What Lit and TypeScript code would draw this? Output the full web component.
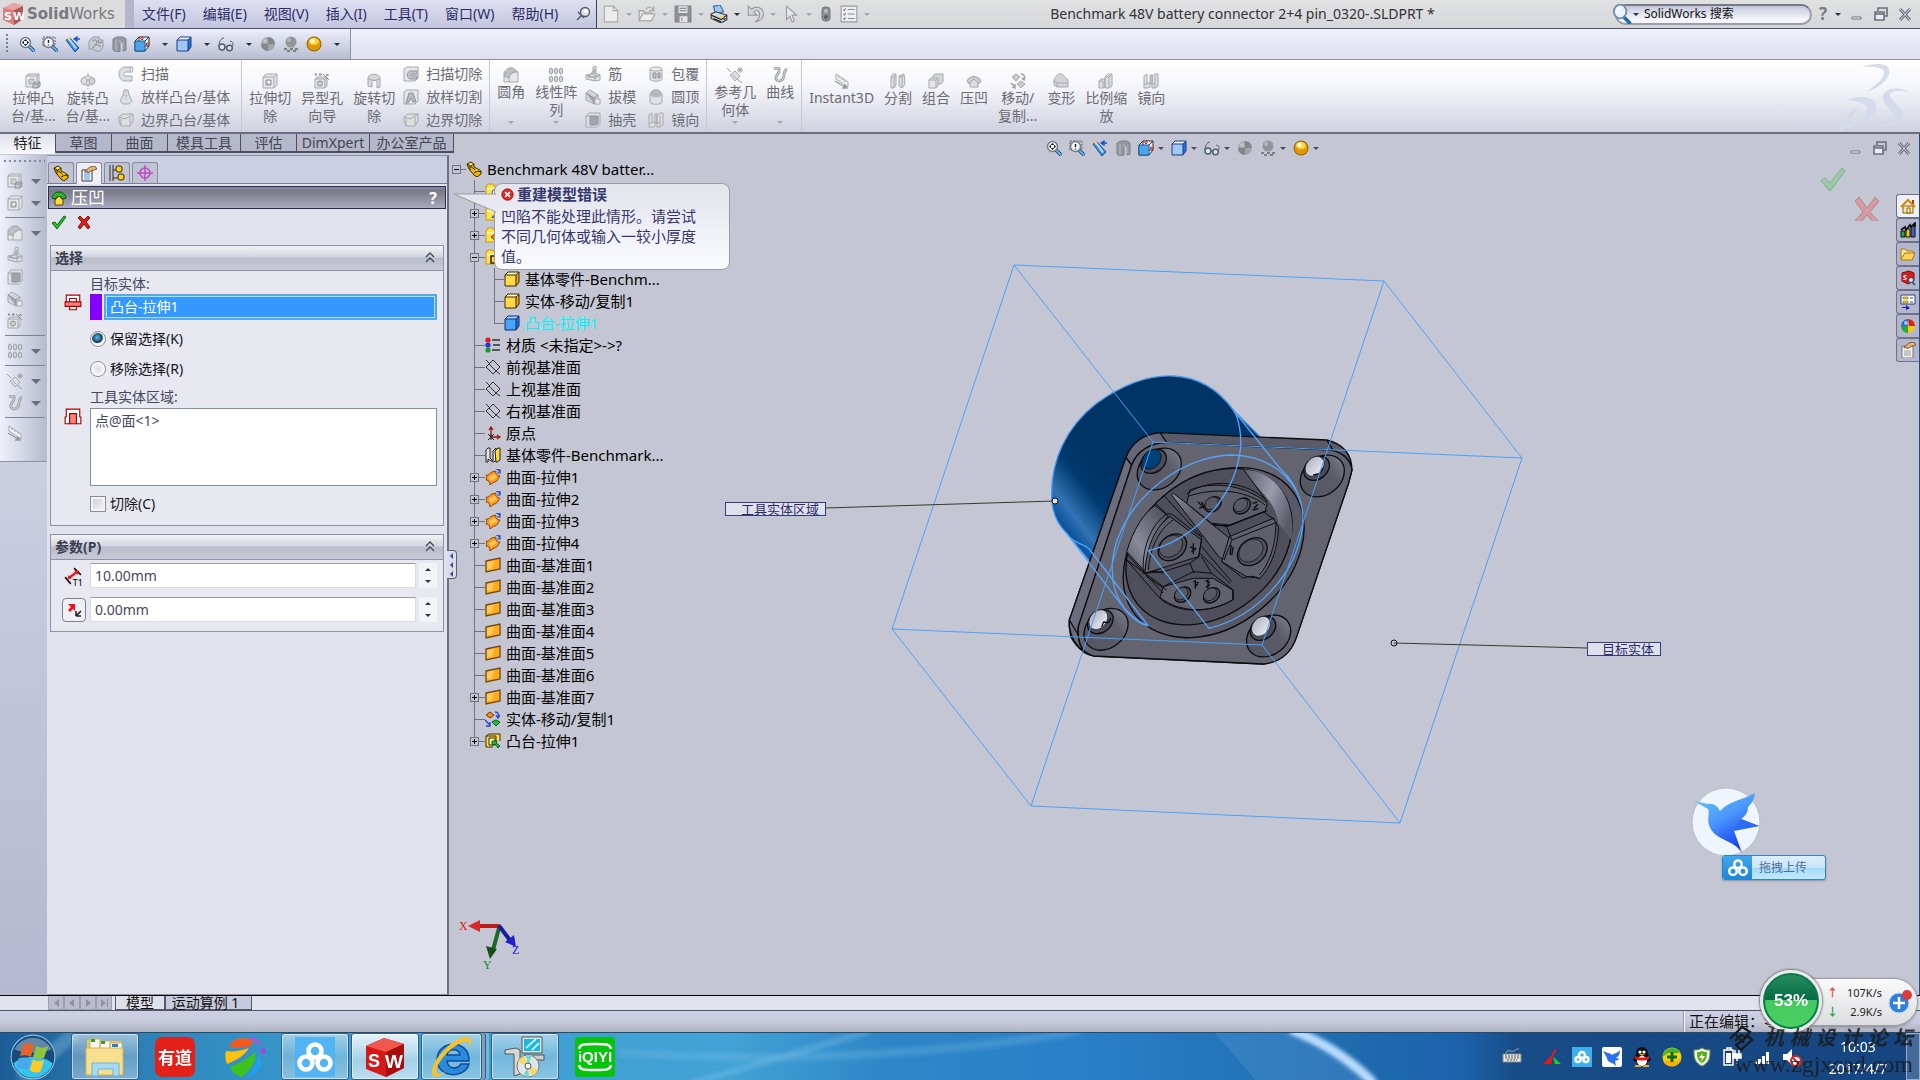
import { LitElement, html, css, svg, nothing } from "lit";
import { customElement } from "lit/decorators.js";
import { classMap } from "lit/directives/class-map.js";

/* ---------- icon artwork, each on a 16 x 16 grid ---------- */

const G = "#a6a8b0";
const cube = (face: string, top: string, side: string, line: string) => svg`
  <path d="M1 4l3-3h11l-3 3z" fill=${top}/><path d="M12 4l3-3v10l-3 4z" fill=${side}/>
  <path d="M1 4h11v11H1z" fill=${face}/>
  <path d="M1 4l3-3h11v10l-3 4H1zM1 4h11v11M12 4l3-3" fill="none" stroke=${line} stroke-linejoin="round"/>`;

const lens = (inner: unknown, dash = false) => svg`
  <path d="M10 10l5 5" stroke="#16406e" stroke-width="3.4" stroke-linecap="round"/>
  <path d="M10 10l5 5" stroke="#6db4ee" stroke-width="1.8" stroke-linecap="round"/>
  ${dash ? svg`<rect x="1" y="1" width="12" height="9" fill="none" stroke="#666" stroke-dasharray="2 1"/>` : nothing}
  <circle cx="6.500" cy="6.500" r="5" fill="#f2f6fb" stroke="#777b86" stroke-width="1.500"/>${inner}`;

const plane = svg`<path d="M1 8L8 1l7 7-7 7zM4 5l7 7M1 1l4 4M11 12l4 3" fill="none" stroke="#222" stroke-width="0.900"/>`;
const folder = (mark: unknown) => svg`
  <path d="M1 3h1l1-2h5l1 2h6v12H1z" fill="#ffe34d" stroke="#c79a1c"/><path d="M2 5h12v2H2z" fill="#fff7a0"/>${mark}`;

const icons: Record<string, unknown> = {
  fit: lens(svg`<path d="M6.500 3l2 2h-4zM6.500 10l2-2h-4zM3 6.500l2-2v4zM10 6.500l-2-2v4z" fill="#222"/>`),
  area: lens(svg`<path d="M6.500 4v3M6.500 8.500v1" stroke="#222" stroke-width="1.400"/>`, true),
  prev: svg`<path d="M1 4l4-2 9 10-4 4z" fill="#3b8ee0" stroke="#1c4e8c"/><path d="M3 3l3 1 6 8-2 1z" fill="#b5dcfb"/>
    <circle cx="4" cy="3" r="1.600" fill="#efd27a"/><path d="M9 3h6M9 3l3-2v4z" stroke="#2454c6" fill="#2454c6" stroke-width="1.300"/>`,
  sect: svg`<path d="M1 5l4-4h6l1 3h3v8l-3 3H8l-3-2H1z" fill="#c9cbd2" stroke="#9a9ca6"/><path d="M4 5c4-3 7 1 3 4M5 12c0-4 6-4 8-1M10 4l1 3 3-1" fill="none" stroke="#83858f"/>`,
  column: svg`<path d="M2 3l4-2h6l3 2v11l-3 1V6H9v9l-4 1-3-2z" fill="#96989f" stroke="#7c7e86"/><path d="M5 4v11M9 4v3M12 5v9" stroke="#b9bbc1"/>`,
  orient: svg`<path d="M1 5l4-4h10v9l-4 5H1z" fill="#e9edf5" stroke="#333"/><path d="M1 5h10v10H1z" fill="#4da6ea" stroke="#1d5c9c"/>
    <path d="M11 5l4-4M5 1v4M15 10h-4" stroke="#333" fill="none"/><path d="M8 0v4M6.500 2.500L8 4l1.500-1.500M16 8h-4M13.500 6.500L12 8l1.500 1.500" stroke="#d3181c" fill="none"/>`,
  style: cube("#9fc8f5", "#e6f1fd", "#2e6fd8", "#1d3f86"),
  glasses: svg`<circle cx="4" cy="11" r="3" fill="#d4e9f8" stroke="#555a66" stroke-width="1.400"/><circle cx="11.500" cy="12" r="2.800" fill="#d4e9f8" stroke="#555a66" stroke-width="1.400"/>
    <path d="M1 10c0-4 2-8 5-8M7 11h2M14 11c2-4 1-5-2-6" fill="none" stroke="#555a66"/>`,
  grayball: svg`<circle cx="8" cy="8" r="7" fill="#a3a5ac"/><path d="M8 1a7 7 0 0 1 7 7H8zM1 8h7v7a7 7 0 0 1-7-7z" fill="#84868d"/><circle cx="5" cy="5" r="2" fill="#c4c6cb"/>`,
  scene: svg`<path d="M1 11h14l1 5H0z" fill="#c4c6cc"/><path d="M1 12h3v2H1zM7 12h3v2H7zM4 14h3v2H4zM10 14h3v2h-3zM12 12h3v2h-3z" fill="#7c7e86"/><circle cx="8" cy="6" r="5.500" fill="#93959c"/><circle cx="6" cy="4" r="2" fill="#b5b7bd"/>`,
  gold: svg`<circle cx="8" cy="8" r="7.500" fill="#8a5a00"/><circle cx="8" cy="8" r="6.600" fill="#e09a08"/><path d="M3 6c0-5 8-6 10 0-1 4-9 4-10 0z" fill="#ffd640"/><circle cx="6.500" cy="5" r="2.200" fill="#fffbe0"/>`,
  pin: svg`<circle cx="10" cy="6" r="4.500" fill="#dde0e8" stroke="#555a66" stroke-width="1.300"/><path d="M7 9l-5 5M3 6l6 6" stroke="#555a66" stroke-width="1.500"/><circle cx="11" cy="5" r="2" fill="#fff"/>`,
  doc: svg`<path d="M2 1h8l4 4v10H2z" fill="#ececec" stroke="#a9a9a9"/><path d="M10 1v4h4" fill="none" stroke="#a9a9a9"/>`,
  open: svg`<path d="M1 14V5h4l1 2h6v7z" fill="#ddd" stroke="#a4a4a4"/><path d="M1 14l3-6h11l-3 6z" fill="#eee" stroke="#a4a4a4"/><path d="M7 4c2-3 5-3 6 0M14 1v4h-4" fill="none" stroke="#a4a4a4"/>`,
  save: svg`<path d="M1 1h14v14H1z" fill="#8e9097" stroke="#808289"/><path d="M4 1h8v6H4zM5 10h7v5H5z" fill="#e4e4e6"/><path d="M5 3h6M5 5h6M7 11v3" stroke="#8e9097"/>`,
  print: svg`<path d="M3 1l6-1 3 6-7 2z" fill="#9cc8f0" stroke="#3a6ea8"/><path d="M1 8l4-2 10 3v4l-5 3-9-4z" fill="#d9dade" stroke="#3d3f45"/><path d="M1 9l9 4 5-4M3 12l7 3M12 13l2-1" fill="none" stroke="#222"/><path d="M9 10l3 1" stroke="#e8d23a" stroke-width="1.500"/>`,
  undo: svg`<path d="M2 1v8h8L7 6.500C9 3 12.500 5 12 9c0 2-1 4-4 6 5-1 7.500-4 7.500-7C15.500 2 8 0 5 4z" fill="#d6d6d8" stroke="#96989e"/>`,
  cursor: svg`<path d="M4 1v12l3-3 2 5 2-1-2-5h4z" fill="#e8e8ea" stroke="#9a9ca2"/>`,
  light: svg`<rect x="4" y="1" width="8" height="14" rx="3" fill="#8c8e94" stroke="#74767c"/><circle cx="8" cy="5" r="2" fill="#b9bbc0"/><circle cx="8" cy="11" r="2" fill="#5d5f65"/>`,
  opts: svg`<path d="M1 1h14v14H1z" fill="#efefef" stroke="#9a9ca2"/><path d="M7 4h6M7 8h6M7 12h6M3 4l1 1 1-2M3 8l1 1 1-2M3 12l1 1 1-2" fill="none" stroke="#8a8c92"/>`,
  search: svg`<path d="M9 10l5 5" stroke="#2c6ba8" stroke-width="3" stroke-linecap="round"/><ellipse cx="6.500" cy="6" rx="5" ry="5.500" fill="#e9f4fc" stroke="#6f8fab" stroke-width="1.500"/><path d="M4 7c0-3 1-4 3-4" stroke="#fff" fill="none"/>`,
  extrude: svg`<path d="M1 3l2-2h11v8M1 3h11v5M12 3l2-2M1 3v11h7" fill="#e6e7eb" stroke=${G}/><path d="M4 6h5v5H4z" fill="#d0d2d7" stroke=${G}/><path d="M8 11l2-2h5v4l-2 2H8zM8 11h5v4M13 11l2-2" fill="#c6c8cd" stroke="#8f9199"/>`,
  revolve: svg`<path d="M8 0v16" stroke=${G} stroke-dasharray="4 1"/><ellipse cx="4" cy="8" rx="3" ry="3.500" fill="#e0e2e6" stroke=${G}/><ellipse cx="12" cy="8" rx="3" ry="3.500" fill="#cfd1d6" stroke=${G}/><path d="M4 4.500c2-2 6-2 8 0M4 11.500c2 1 6 1 8 0" fill="none" stroke=${G}/>`,
  sweep: svg`<path d="M14 1v5H8c-3 0-3 4 0 4h6v5H7C-1 15-1 1 7 1z" fill="#dddfe3" stroke=${G}/><ellipse cx="13.500" cy="3.500" rx="1.500" ry="2.500" fill="#f3f3f5" stroke=${G}/>`,
  loft: svg`<path d="M6 1h4l1 5 3 6-3 3H5l-3-3 3-6z" fill="#dddfe3" stroke=${G}/><path d="M5 6c2 1 4 1 6 0M8 2v9" fill="none" stroke="#c1c3c9"/>`,
  bound: svg`<path d="M1 5l4-3h10v7l-3 5H3L1 9z" fill="#dddfe3" stroke=${G}/><path d="M1 5l6 2 8-5M3 14V7M12 13V5" fill="none" stroke=${G}/>`,
  cut: svg`<path d="M1 4l3-3h11v11l-3 3H1z" fill="#e6e7eb" stroke=${G}/><path d="M1 4h11v11M12 4l3-3" fill="none" stroke=${G}/><path d="M4 7h5v5H4z" fill="#c6c8cd" stroke="#8f9199"/><path d="M6 8h2v2H6z" fill="#fff"/>`,
  hole: svg`<path d="M1 6l2-2h10v9l-2 2H1zM1 6h10v9M11 6l2-2" fill="#e2e3e7" stroke=${G}/><circle cx="6" cy="10.500" r="2.500" fill="#cfd1d6" stroke="#8f9199"/><path d="M9 1l6 6M2 0v3M1 1.500h2M6 0v3M5 1.500h3M13 1v2M12 2h3" stroke="#8b8d95"/>`,
  revcut: svg`<path d="M2 13V5c0-5 12-5 12 0v9l-3 1V9c0-2-5-2-5 0v5z" fill="#d6d8dc" stroke=${G}/><path d="M2 5c2 3 10 3 12 0" fill="none" stroke=${G}/>`,
  sweepcut: svg`<path d="M1 3l3-2h11v11l-3 3H1z" fill="#e6e7eb" stroke=${G}/><path d="M14 5v3H9c-2 0-2 2 0 2h5v3H8c-5 0-5-8 0-8z" fill="#c3c5ca" stroke="#8f9199"/>`,
  loftcut: svg`<path d="M1 3l3-2h11v11l-3 3H1z" fill="#e6e7eb" stroke=${G}/><path d="M6 4h4l3 9h-3L8 9l-3 5H3z" fill="#b8bac0" stroke="#8f9199"/>`,
  fillet: svg`<path d="M1 15V7c0-3 3-6 6-6h3l5 4v10z" fill="#e6e7eb" stroke=${G}/><path d="M1 9c1-4 4-8 9-8l3 3c-4 1-6 3-7 7z" fill="#bfc1c6" stroke=${G}/><path d="M6 15V10c1-3 4-5 9-5" fill="none" stroke=${G}/>`,
  pattern: svg`<g fill="#d2d4d9" stroke="#9da0a8"><ellipse cx="3" cy="4" rx="1.700" ry="3"/><ellipse cx="8" cy="4" rx="1.700" ry="3"/><ellipse cx="13" cy="4" rx="1.700" ry="3"/><ellipse cx="3" cy="12" rx="1.700" ry="3"/><ellipse cx="8" cy="12" rx="1.700" ry="3"/><ellipse cx="13" cy="12" rx="1.700" ry="3"/></g>`,
  rib: svg`<path d="M1 9l7-1V1l3-1v7l4 2v5l-5 1-9-2z" fill="#dddfe3" stroke=${G}/><path d="M3 11l7-8v8zM1 9l9 3 5-3M10 12v3" fill="#b9bbc1" stroke=${G}/>`,
  draft: svg`<path d="M1 4l4-3 8 5v8l-4 1-8-4z" fill="#d3d5da" stroke=${G}/><path d="M1 4l8 5v6M9 9l4-3" fill="#a3a5ac" stroke="#8f9199"/><path d="M10 10h5v5h-5z" fill="#eceef1" stroke=${G}/>`,
  shell: svg`<path d="M1 4l3-3h11v11l-3 3H1z" fill="#dfe0e4" stroke=${G}/><path d="M5 4h8v8l-3 1H5z" fill="#a2a4ab" stroke="#8f9199"/><path d="M1 4h4v9" fill="none" stroke=${G}/>`,
  wrap: svg`<path d="M2 3v10c0 3 12 3 12 0V3" fill="#dfe0e4" stroke=${G}/><ellipse cx="8" cy="3" rx="6" ry="2" fill="#eee" stroke=${G}/><path d="M5 7h3v5H5zM10 7h2v5h-2z" fill="#c3c5ca" stroke="#8f9199"/>`,
  dome: svg`<path d="M2 6c0-7 12-7 12 0v7c0 3-12 3-12 0z" fill="#dfe0e4" stroke=${G}/><path d="M2 6c0-7 12-7 12 0-2 3-10 3-12 0z" fill="#b5b7bd"/>`,
  mirror: svg`<path d="M1 3l3-2v9h3v4l-2 1H1zM9 3l3-2h3v12l-3 2H9zM7 2h2v9H7z" fill="#e0e1e5" stroke=${G}/><path d="M1 11h4M9 11h3M12 3v12" stroke=${G}/>`,
  ref: svg`<path d="M3 8l5-4 5 5-5 5z" fill="#dcdee2" stroke=${G}/><path d="M0 1l4 4M10 12l5 4M13 0v6M10 3h6M11 1l4 4M15 1l-4 4" stroke="#9fa1a8"/><path d="M6 8l3 3" stroke=${G}/>`,
  curve: svg`<path d="M2 2c7-3 6 2 3 6s1 8 5 5 0-9 5-11" fill="none" stroke="#989aa2" stroke-width="2.800"/><path d="M2 2c7-3 6 2 3 6s1 8 5 5 0-9 5-11" fill="none" stroke="#dcdee2" stroke-width="1"/>`,
  instant: svg`<path d="M2 1v5l12 8V9L2 1zM5 3v2M8 5v2M11 7v2" fill="#f0f0f2" stroke=${G}/><path d="M1 8l10 6M9 15l4 0-2-3z" stroke="#989aa2" fill="#989aa2" stroke-width="1.400"/>`,
  split: svg`<path d="M1 4l2-3h3v11l-2 3H1zM9 3l5-2 1 10-3 4-3-2z" fill="#e0e1e5" stroke=${G}/><path d="M4 4v11M1 4h3l2-3M12 4v11M9 3l3 1 2-3" fill="none" stroke=${G}/>`,
  combine: svg`<path d="M5 3l2-2h8v8l-2 2H5z" fill="#d2d4d9" stroke=${G}/><path d="M1 7l2-2h7v8l-2 2H1zM1 7h7v8M8 7l2-2" fill="#e4e5e9" stroke=${G}/>`,
  indent: svg`<path d="M1 8c2-6 12-6 14 0l-2 3-3-3H6l-3 3z" fill="#c9cbd0" stroke=${G}/><path d="M4 10l4-4 4 4v4H4z" fill="#dfe0e4" stroke=${G}/>`,
  move: svg`<path d="M2 4l4-3 4 3-4 4zM7 11l4-3 4 3-4 4z" fill="#c9cbd0" stroke=${G}/><path d="M11 1c3 0 4 2 3 5M12 5l2 2 1-3M1 10l4 4M2 14l3 1v-4" fill="none" stroke="#989aa2" stroke-width="1.300"/>`,
  deform: svg`<path d="M1 8c1-5 5-8 8-7l6 6v7H4l-3-2z" fill="#d2d4d9" stroke=${G}/><path d="M1 8l4 2h10M4 14v-4" fill="none" stroke=${G}/>`,
  scale: svg`<path d="M1 8l2-2h4v8l-2 1H1zM7 4l3-3h4v12l-3 2H7z" fill="#e0e1e5" stroke=${G}/><path d="M1 8h4v7M7 4h4v11M11 4l3-3" fill="none" stroke=${G}/>`,
  part: svg`<path d="M1 3l4-2 3 2v3l4 2 3 2v3l-4 3-3-2-5-6z" fill="#f0b80c" stroke="#3a2a00"/><path d="M1 3l3 2v4M5 5l3-2M8 12l4-2 3 1M4 5l7 5" fill="none" stroke="#3a2a00"/><path d="M5 2l2 1-2 1-2-1zM9 8l3 1-2 1z" fill="#fff39a"/>`,
  props: svg`<path d="M1 4h10v11H1z" fill="#fff" stroke="#333"/><path d="M3 7h6M3 9h6M3 11h6M3 13h6" stroke="#3c8be0"/><path d="M4 5l5-4 5-1 2 3-6 2-3 2-1-2-2 1z" fill="#e3b478" stroke="#6b4517" stroke-width="0.800"/>`,
  config: svg`<path d="M1 0v16M4 0v16M4 5h5M4 13h5" stroke="#222" stroke-width="0.900"/><rect x="7" y="1" width="6" height="6" rx="2" fill="#ffcf1b" stroke="#3a2a00"/><rect x="9" y="9" width="6" height="6" rx="2" fill="#ffcf1b" stroke="#3a2a00"/>`,
  target: svg`<circle cx="8" cy="8" r="5" fill="none" stroke="#c048c8" stroke-width="1.600"/><path d="M8 0v16M0 8h16" stroke="#c048c8" stroke-width="1.400"/>`,
  indentOn: svg`<path d="M1 8c1-8 13-8 14 0l-3 1c-1-3-7-3-8 0z" fill="#2bb534" stroke="#0b4d10"/><path d="M4 10l4-4 4 4v5H4z" fill="#ffd93a" stroke="#5c4200"/>`,
  ok: svg`<path d="M1 9l3-1 2 3 7-9 2 1-9 12z" fill="#26c22c" stroke="#0b6a10"/>`,
  no: svg`<path d="M2 4l2-2 4 4 4-4 2 2-4 4 4 5-2 2-4-5-4 5-2-2 4-5z" fill="#e3201b" stroke="#8d0a08"/>`,
  bodyA: svg`<path d="M2 7V1h12v6M5 11v3h6v-3M5 7V4h6v3" fill="#fff" stroke="#a80000"/><path d="M1 7h14v4H1z" fill="#ff8080" stroke="#a80000"/>`,
  bodyB: svg`<path d="M1 14V8h1V1h12v7h1v6h-4V5H5v9z" fill="#fff" stroke="#a80000"/><path d="M5 5h6v9H5z" fill="#ff8080" stroke="#a80000"/>`,
  thick: svg`<path d="M1 9l5 6M9 1l6 6" stroke="#111" stroke-width="1.400"/><path d="M4 10l8-6" stroke="#e8151a" stroke-width="2"/><path d="M3 11l1-4 3 3zM13 3l-4 0 3 4z" fill="#e8151a"/>`,
  reverse: svg`<path d="M2 2h7v7L7 7l-3 3-2-2 3-3z" fill="#f21118"/><path d="M10 14V9M10 14h5M10 14l5-5" fill="none" stroke="#222" stroke-width="1.600"/>`,
  yellowBody: cube("#ffd94a", "#fff6bd", "#e8a616", "#3b2b00"),
  blueBody: cube("#4aa3f5", "#9ed2ff", "#1f6ad4", "#0c2f7a"),
  material: svg`<circle cx="3" cy="3" r="2.600" fill="#d81a1a"/><circle cx="3" cy="8" r="2.600" fill="#2633d6"/><circle cx="3" cy="13" r="2.600" fill="#16962a"/><path d="M7 3h8M8 8h7M7 13h8" stroke="#333" stroke-width="1.400"/>`,
  plane,
  origin: svg`<path d="M6 13V3M4 5l2-3 2 3M6 12h8M12 10l3 2-3 2" fill="none" stroke="#a31414" stroke-width="1.300"/><path d="M3 9l6 6M9 9l-6 6M6 9v6" stroke="#222"/>`,
  base: svg`<path d="M1 3l2-2h2v10l3 3V4l3-3v13l-3 1-5-3v3H1z" fill="#e4e6ea" stroke="#222"/><path d="M10 4l3-3h2v12l-3 2h-1z" fill="#ffd83a" stroke="#222"/>`,
  surfExt: svg`<path d="M1 6c3 1 3-2 6-3l4-1c-1 3 1 5 4 5-2 3-3 6-6 6l-4 3c0-3-1-5-4-5 1-2 1-3 0-5z" fill="#ff9a1f" stroke="#8a4700"/><path d="M4 8l6-3 2 3-6 4z" fill="#ffc75a"/><path d="M11 0c2 0 3 1 4 3M15 0v4h-3" fill="none" stroke="#2741c4" stroke-width="1.200"/>`,
  surf: svg`<path d="M1 4l14-3v11L1 15z" fill="#ffab1c" stroke="#6e4a12" stroke-width="1.300"/><path d="M2 5l7-1.500-2 8-5 1z" fill="#ffc95c"/>`,
  moveOn: svg`<path d="M1 4l4-3 4 3-4 3z" fill="#ff8a1c" stroke="#6e3c00"/><path d="M7 11l4-2 4 2-4 4z" fill="#1fc436" stroke="#0b5c17"/><path d="M10 1c3 0 4 2 3 5M11 4l2 3 2-3M0 9l5 5M1 15h4v-4" fill="none" stroke="#2741c4" stroke-width="1.300"/>`,
  bossOn: svg`<path d="M1 3l3-2h11v7M1 3h10v5M1 3v11h7" fill="#ffe14a" stroke="#3b2b00"/><path d="M4 5h6v7H4z" fill="#fff2a0" stroke="#3b2b00"/><path d="M7 8h5l-1 2 4 3-2 2-3-4-3 1z" fill="#2fbd3a" stroke="#0b5c17"/>`,
  fHist: folder(svg`<circle cx="11" cy="10" r="4" fill="#fff" stroke="#557"/>`),
  fSens: folder(svg`<path d="M6 13l5-6 5 6z" fill="#3763d0"/>`),
  fBody: folder(svg`<path d="M6 10l5-4 5 4-5 4z" fill="#ff8a1c" stroke="#6e3c00"/>`),
  fSolid: folder(svg`<path d="M6 7h7v7H6z" fill="#ffd33a" stroke="#222" stroke-width="1.500"/>`),
  error: svg`<circle cx="8" cy="8" r="7" fill="#e02a24" stroke="#8f0f0c"/><path d="M5 5l6 6M11 5l-6 6" stroke="#fff" stroke-width="2"/>`,
  min: svg`<path d="M3 11h9v2H3z" fill="#fff" stroke="#70727f"/>`,
  restore: svg`<path d="M5 5V2h9v8h-3" fill="none" stroke="#6c6e7c" stroke-width="1.600"/><path d="M2 6h9v8H2z" fill="#eceef4" stroke="#6c6e7c" stroke-width="1.600"/><path d="M2 8h9" stroke="#6c6e7c" stroke-width="1.600"/>`,
  close: svg`<path d="M3 3l10 11M13 3L3 14" stroke="#6c6e7c" stroke-width="3"/><path d="M3 3l10 11M13 3L3 14" stroke="#e6e8f0" stroke-width="0.900"/>`,
  home: svg`<path d="M12 2h2v5h-2z" fill="#c82a1c"/><path d="M3 8h10v7H3z" fill="#ffe9a0" stroke="#8a5d00"/><path d="M1 9l7-7 7 7" fill="none" stroke="#d58c00" stroke-width="2.200"/><path d="M7 10h3v5H7z" fill="#fff" stroke="#8a5d00"/>`,
  library: svg`<path d="M1 9h4v6H1z" fill="#21a83a" stroke="#111"/><path d="M6 7h4v8H6z" fill="#f4c81a" stroke="#111"/><path d="M11 4h4v11h-4z" fill="#3763d0" stroke="#111"/><path d="M1 8l4-3 1 3 4-5 1 2 4-4v4" fill="none" stroke="#111" stroke-width="1.800"/>`,
  folderY: svg`<path d="M1 13V3h4l2 2h6v3" fill="#ffe695" stroke="#a87410"/><path d="M1 13l4-6h10l-3 7H1z" fill="#ffd35c" stroke="#a87410"/>`,
  swfind: svg`<path d="M2 3l7-2 5 2v8l-6 3-6-3z" fill="#d81f1f" stroke="#7d0909"/><text x="3" y="10" font-size="7" font-weight="bold" fill="#fff">S</text><circle cx="11" cy="10" r="2.500" fill="#cfe6fa" stroke="#345"/><path d="M12 12l3 3" stroke="#2c6ba8" stroke-width="2"/>`,
  palette: svg`<path d="M1 1h14v9H1z" fill="#fff" stroke="#333f6b"/><path d="M3 3h5v2H3zM3 7h5v2H3z" fill="#f4c81a" stroke="#6b5a00" stroke-width="0.500"/><path d="M10 3h3v2h-3zM10 7h3v2h-3z" fill="#8fa4d8"/><path d="M2 13h4v-2l4 3-4 2v-2H2z" fill="#1a1ac8"/>`,
  beach: svg`<circle cx="8" cy="8" r="7" fill="#f4c81a"/><path d="M8 1a7 7 0 0 1 7 7H9z" fill="#d8241c"/><path d="M8 1a7 7 0 0 0-7 7l7 1z" fill="#2a6ad8"/><path d="M1 8a7 7 0 0 0 7 7V8z" fill="#25a83a"/><circle cx="6" cy="5" r="2" fill="#fff" opacity="0.600"/>`,
  custom: svg`<path d="M2 4h11v12H2z" fill="#f5f5f2" stroke="#777"/><path d="M4 9h7M4 11h7M4 13h7" stroke="#999"/><path d="M4 5l5-4 5-1 2 3-6 2-3 2-1-2-2 1z" fill="#e3b478" stroke="#6b4517" stroke-width="0.800"/>`,
  cloud: svg`<g fill="none" stroke="#fff" stroke-width="2"><circle cx="8" cy="5" r="3"/><circle cx="4" cy="10.500" r="3"/><circle cx="12" cy="10.500" r="3"/></g>`,
};

const icon = (name: string, size = "s16") => html`<svg class=${size} viewBox="0 0 16 16" aria-hidden="true">${icons[name]}</svg>`;
const caret = (cls = "") => html`<span class="caret ${cls}"></span>`;

/* ---------- data ---------- */

interface Tool { name: string; lines: string[]; icon: string; drop?: boolean }
type Col = [string, string][];
interface Group { tools: Tool[]; cols: Col[]; cls?: string }

const t = (icon: string, ...lines: string[]): Tool => ({ name: lines.join(""), lines, icon });
const groups: Group[] = [
  { cls: "first", tools: [t("extrude", "拉伸凸", "台/基..."), t("revolve", "旋转凸", "台/基...")],
    cols: [[["sweep", "扫描"], ["loft", "放样凸台/基体"], ["bound", "边界凸台/基体"]]] },
  { tools: [t("cut", "拉伸切", "除"), t("hole", "异型孔", "向导"), t("revcut", "旋转切", "除")],
    cols: [[["sweepcut", "扫描切除"], ["loftcut", "放样切割"], ["bound", "边界切除"]]] },
  { tools: [{ ...t("fillet", "圆角"), drop: true }, { ...t("pattern", "线性阵", "列"), drop: true }],
    cols: [[["rib", "筋"], ["draft", "拔模"], ["shell", "抽壳"]], [["wrap", "包覆"], ["dome", "圆顶"], ["mirror", "镜向"]]] },
  { tools: [{ ...t("ref", "参考几", "何体"), drop: true }, { ...t("curve", "曲线"), drop: true }], cols: [] },
  { tools: [t("instant", "Instant3D"), t("split", "分割"), t("combine", "组合"), t("indent", "压凹"), t("move", "移动/", "复制..."),
      t("deform", "变形"), t("scale", "比例缩", "放"), t("mirror", "镜向")], cols: [] },
];

interface Node { lvl: 0 | 1 | 2; text: string; icon: string; box?: "+" | "-"; sel?: boolean; last?: boolean }
const tree: Node[] = [
  { lvl: 0, text: "Benchmark 48V batter...", icon: "part", box: "-" },
  { lvl: 1, text: "", icon: "fHist" },
  { lvl: 1, text: "", icon: "fSens", box: "+" },
  { lvl: 1, text: "", icon: "fBody", box: "+" },
  { lvl: 1, text: "", icon: "fSolid", box: "-" },
  { lvl: 2, text: "基体零件-Benchm...", icon: "yellowBody" },
  { lvl: 2, text: "实体-移动/复制1", icon: "yellowBody" },
  { lvl: 2, text: "凸台-拉伸1", icon: "blueBody", sel: true, last: true },
  { lvl: 1, text: "材质 <未指定>->?", icon: "material" },
  { lvl: 1, text: "前视基准面", icon: "plane" },
  { lvl: 1, text: "上视基准面", icon: "plane" },
  { lvl: 1, text: "右视基准面", icon: "plane" },
  { lvl: 1, text: "原点", icon: "origin" },
  { lvl: 1, text: "基体零件-Benchmark...", icon: "base" },
  ...[1, 2, 3, 4].map((n): Node => ({ lvl: 1, text: `曲面-拉伸${n}`, icon: "surfExt", box: "+" })),
  ...[1, 2, 3, 4, 5, 6].map((n): Node => ({ lvl: 1, text: `曲面-基准面${n}`, icon: "surf" })),
  { lvl: 1, text: "曲面-基准面7", icon: "surf", box: "+" },
  { lvl: 1, text: "实体-移动/复制1", icon: "moveOn" },
  { lvl: 1, text: "凸台-拉伸1", icon: "bossOn", box: "+", last: true },
];

const base = css`
  * { box-sizing: border-box; }
  button, input, textarea { font: inherit; color: inherit; margin: 0; }
  button { background: none; border: 0; padding: 0; }
  a { color: inherit; text-decoration: none; }
  svg { display: block; flex: none; }
  .s16 { width: 16px; height: 16px; }
  .s18 { width: 18px; height: 18px; }
  .s20 { width: 20px; height: 20px; }
  .caret { flex: none; width: 0; height: 0; border: 3px solid transparent; border-top: 3px solid #a3a4ac; border-bottom: 0; }
  .caret.dark { border-top-color: #2f3047; }
  .caret.big { border-width: 5px 5px 0; border-top-color: #6b6d78; }
`;

/* ---------- title bar and menus ---------- */

@customElement("title-bar")
class TitleBar extends LitElement {
  static styles = [base, css`
    :host { display: flex; align-items: center; height: 29px; color: #22254a; border-bottom: 1px solid #50516a;
      background: linear-gradient(#e0e1e1, #d6d7da); }
    .brand { display: flex; flex: none; align-items: center; gap: 3px; width: 134px; height: 28px; padding-left: 2px;
      background: linear-gradient(90deg, #dcdcdc 0 125px, #b3b5cf 125px); font: bold 16px "DejaVu Sans", sans-serif; color: #77797d; }
    .logo { width: 22px; height: 24px; }
    .brand b + span { font-weight: normal; }
    .word { font-size: 15px; }
    nav { display: flex; flex: none; align-items: center; gap: 17px; width: 463px; height: 28px; padding-left: 8px; color: #2b2c66;
      background: linear-gradient(#dfe0f2, #c3c5de); border-right: 1px solid #3d3e58; }
    nav button { white-space: nowrap; }
    .tools { display: flex; flex: none; align-items: center; gap: 6px; padding-left: 5px; }
    h1 { flex: 1; margin: 0; text-align: center; font-size: 14px; font-weight: normal; color: #333; }
    .search { display: flex; align-items: center; width: 197px; height: 21px; gap: 3px; border: 2px solid #9a9ca9; border-top-color: #77798a;
      border-radius: 11px; background: linear-gradient(#c5c8dc, #f5f6fb 80%); font-size: 12px; color: #111; }
    .search svg { margin: 0 -2px 0 -5px; width: 20px; height: 20px; }
    .search input { flex: 1; min-width: 0; border: 0; background: none; padding: 0 0 0 2px; outline: 0; }
    .search input::placeholder { color: #111; opacity: 1; }
    .win { display: flex; align-items: center; gap: 8px; padding: 0 7px; }
    .help { font-weight: bold; font-size: 17px; color: #7b7d88; }
  `];
  render() {
    const menus = ["文件(F)", "编辑(E)", "视图(V)", "插入(I)", "工具(T)", "窗口(W)", "帮助(H)"];
    const tools: [string, string][] = [["doc", ""], ["open", ""], ["save", ""], ["print", "dark"], ["undo", ""], ["cursor", ""]];
    return html`
      <div class="brand">
        <svg class="logo" viewBox="0 0 22 24"><path d="M1 6l11-5 9 3v13l-9 6-11-5z" fill="#d77f7c"/><path d="M12 8l9-4v13l-9 6z" fill="#b05553"/>
          <path d="M1 6l11-5 9 3-9 4z" fill="#e9a6a3"/><text x="2" y="18" font-size="11" fill="#fff">S</text><text x="11" y="18" font-size="11" fill="#fff">W</text></svg>
        <span class="word"><b>Solid</b><span>Works</span></span>
      </div>
      <nav>${menus.map((m) => html`<button>${m}</button>`)}${icon("pin")}</nav>
      <div class="tools">
        ${tools.map(([n, c]) => html`<button aria-label=${n}>${icon(n, "s18")}</button>${caret(c)}`)}
        ${icon("light")}${icon("opts", "s18")}${caret()}
      </div>
      <h1>Benchmark 48V battery connector 2+4 pin_0320-.SLDPRT *</h1>
      <label class="search">${icon("search")}${caret("dark")}<input placeholder="SolidWorks 搜索" aria-label="SolidWorks 搜索" /></label>
      <div class="win"><button class="help">?</button>${caret("dark")}<button aria-label="最小化">${icon("min")}</button>
        <button aria-label="还原">${icon("restore")}</button><button aria-label="关闭">${icon("close")}</button></div>`;
  }
}

/* ---------- quick view bar and ribbon ---------- */

@customElement("ribbon-bar")
class RibbonBar extends LitElement {
  static styles = [base, css`
    :host { display: block; color: #6b6c74; line-height: 18px; }
    .quick { height: 31px; background: linear-gradient(#eef0fb, #dfe1f1); border-bottom: 1px solid #8e8f9c; }
    .quick div { display: flex; align-items: center; gap: 7px; width: 351px; height: 30px; padding-left: 6px; border-right: 1px solid #8e8f9c;
      background: linear-gradient(#eceefa, #b9bdd2); }
    .grip { width: 2px; height: 20px; margin-right: 4px; background: repeating-linear-gradient(#7c7e90 0 2px, transparent 2px 4px); }
    .quick .caret { margin: 0 1px 0 5px; }
    .ribbon { display: flex; height: 74px; padding-left: 11px; border-bottom: 2px solid #6b6d80; position: relative;
      background: linear-gradient(#fff, #f4f5f9 40%, #cfd1df); }
    .group { display: flex; gap: 10px; padding: 0 7px; border-right: 1px solid #c6c8d5; }
    .group:last-of-type { border: 0; }
    .group.first { padding: 0 11px 0 0; gap: 10px; }
    .tool { display: flex; flex-direction: column; align-items: center; height: 64px; padding-top: 13px; white-space: pre-line; text-align: center; }
    .tool.drop { padding-top: 7px; }
    .tool .caret { margin-top: auto; }
    .col { display: flex; flex-direction: column; padding-top: 2px; margin-left: -2px; }
    .col + .col { margin-left: 2px; }
    .col button { display: flex; align-items: center; gap: 7px; height: 23px; }
    .ds { position: absolute; right: 10px; top: 3px; width: 72px; height: 68px; }
  `];
  render() {
    return html`
      <div class="quick"><div><span class="grip"></span>
        ${["fit", "area", "prev", "sect", "column", "orient", "/", "style", "/", "glasses", "/", "grayball", "scene", "gold", "/"].map((n) =>
          n === "/" ? caret("dark") : html`<button aria-label=${n}>${icon(n)}</button>`)}
      </div></div>
      <div class="ribbon">
        ${groups.map((g) => html`<div class="group ${g.cls ?? ""}">
          ${g.tools.map((x) => html`<button class=${classMap({ tool: true, drop: !!x.drop })}>${icon(x.icon)}<span>${x.lines.join("\n")}</span>${x.drop ? caret() : nothing}</button>`)}
          ${g.cols.map((c) => html`<div class="col">${c.map(([i, n]) => html`<button>${icon(i)}<span>${n}</span></button>`)}</div>`)}
        </div>`)}
        <svg class="ds" viewBox="0 0 72 68"><g fill="#d5dbea"><path d="M24 4c14-5 30-4 27 7-3 9-12 14-22 18 8-7 15-11 17-18 2-6-8-8-22-7z"/>
          <path fill-rule="evenodd" d="M8 37c16-6 33-3 30 9C34 58 17 63 0 68l15-23 5 0-10 17c9-3 17-8 19-14 2-7-6-10-21-11z"/>
          <path d="M72 29c-10-2-18-2-20 2-2 5 16 16 13 24-4 10-22 9-31 5 12 2 22 1 23-5 1-5-15-15-12-23 4-8 17-8 27-3z"/></g></svg>
      </div>`;
  }
}

/* ---------- feature property panel ---------- */

@customElement("property-panel")
class PropertyPanel extends LitElement {
  static styles = [base, css`
    :host { display: flex; position: relative; color: #464860; line-height: 18px; }
    .strip { width: 47px; display: flex; flex-direction: column; background: linear-gradient(#d9dcec, #b4b8d0); }
    .rack { height: 307px; padding-top: 5px; border-bottom: 1px solid #8f91a4; background: linear-gradient(90deg, #eff1fb, #b6bace); }
    .dots { height: 2px; margin: 0 2px 8px 4px; background: repeating-linear-gradient(90deg, #878a9c 0 2px, transparent 2px 5px); }
    .rack button { display: flex; align-items: center; gap: 8px; height: 22px; padding-left: 7px; }
    .rack hr { margin: 3px 2px 4px 5px; border: 0; height: 1px; background: #7f8194; }
    .panel { flex: 1; display: flex; flex-direction: column; min-width: 0; background: #e0e3ec; border-top: 1px solid #8f91a8; border-right: 2px solid #6d6f84; border-bottom: 1px solid #8f91a8; }
    .tabs { display: flex; gap: 2px; height: 28px; padding: 6px 0 0 1px; background: #cbcfe4; border-bottom: 1px solid #7b7d92; }
    .tabs button { display: grid; place-items: center; width: 26px; height: 21px; border: 1px solid #888aa0; border-bottom: 0; border-radius: 3px 3px 0 0; background: #c0c3d3; }
    .tabs .on { background: #eef0f6; height: 22px; }
    .head { display: flex; align-items: center; gap: 4px; height: 23px; margin: 2px 1px 0; padding: 0 8px 0 2px; color: #fff; font-size: 17px;
      border: 1px solid #2b2c4c; background: linear-gradient(#8688a3, #7779 20%, #a9abc2), #7b7d98; }
    .head h2 { flex: 1; margin: 0; font-size: 17px; font-weight: normal; }
    .head button { font-weight: bold; font-size: 16px; }
    .acts { display: flex; align-items: flex-start; gap: 9px; height: 36px; padding: 5px 0 0 4px; }
    section { margin: 0 3px 8px; border: 1px solid #8f91a4; background: #e7e8f0; }
    h3 { display: flex; justify-content: space-between; align-items: center; height: 25px; margin: 0; padding: 0 5px 0 4px; font-size: 14px; border-bottom: 1px solid #8f91a4;
      background: linear-gradient(#f2f3f6, #d3d6df 45%, #b9bdca 50%, #c8cbd7); color: #3c3e50; }
    .body { display: grid; grid-template-columns: 31px 1fr; column-gap: 8px; padding: 4px 6px 3px 0; }
    .body > svg { justify-self: end; }
    .body label { grid-column: 2; }
    .lead { height: 19px; }
    .cap { margin-top: 4px; height: 20px; }
    .target { display: flex; height: 26px; margin-bottom: 4px; }
    .sw { width: 12px; background: #8400ff; margin-right: 2px; }
    .target input { flex: 1; min-width: 0; padding: 0 4px; border: 2px solid #52a9e8; outline: 1px solid #b6dcfa; outline-offset: -3px; background: #3399ff; color: #fff; }
    .opt { display: flex; align-items: center; gap: 4px; height: 30px; color: #15161c; }
    .opt input { appearance: none; width: 16px; height: 16px; border: 1px solid #8c8e96; border-radius: 50%; background: radial-gradient(#dcdee2, #f6f6f8 60%); box-shadow: inset 0 0 0 1px #fff; }
    .opt input:checked { background: radial-gradient(circle at 45% 40%, #58c2ee, #123a5c 5px, #f6f6f8 6px); }
    .opt input[type=checkbox] { border-radius: 0; background: linear-gradient(135deg, #c9ccd3, #f8f8fa); box-shadow: inset 0 0 0 2px #f4f4f6; }
    .opt.cutoff { height: 36px; }
    textarea { display: block; width: 100%; height: 78px; padding: 3px 4px; resize: none; border: 1px solid #7f8fa8; background: #fff; line-height: 18px; overflow: hidden; }
    .num { display: flex; gap: 3px; height: 25px; }
    .num input { flex: 1; min-width: 0; padding: 0 4px; border: 1px solid #d9dbe2; border-top-color: #9a9ca6; background: #fff; }
    .spin { display: flex; flex-direction: column; justify-content: space-around; align-items: center; width: 18px; background: #f3f4f7; }
    .up, .dn { width: 0; height: 0; border: 3px solid transparent; border-top: 0; border-bottom: 3px solid #333; }
    .dn { border-bottom: 0; border-top: 3px solid #333; }
    .num2 { padding: 3px 6px 9px 0; row-gap: 9px; align-items: center; }
    .t1 { position: relative; justify-self: end; }
    .t1 span { position: absolute; right: -1px; bottom: -4px; font-size: 9px; line-height: 12px; color: #000; }
    .rev { justify-self: end; display: grid; place-items: center; width: 24px; height: 24px; margin-right: -4px; border: 1px solid #7e808c; border-radius: 4px; background: #f0f1f5; }
    .split { position: absolute; right: -8px; top: 395px; width: 10px; height: 29px; display: flex; flex-direction: column; justify-content: space-around; align-items: center;
      background: #d9dceb; border: 1px solid #5f6178; border-left: 0; border-radius: 0 4px 4px 0; z-index: 2; }
    .split i { width: 0; height: 0; border: 3px solid transparent; border-left: 0; border-right: 3px solid #453f9c; }
  `];
  render() {
    const rack: [string, boolean][] = [["extrude", true], ["cut", true], ["-", false], ["fillet", true], ["rib", false], ["shell", false], ["draft", false],
      ["hole", false], ["-", false], ["pattern", true], ["-", false], ["ref", true], ["curve", true], ["-", false], ["instant", false]];
    const chev = html`<svg class="s16" viewBox="0 0 16 16"><path d="M4 7l4-4 4 4M4 12l4-4 4 4" fill="none" stroke="#45475a" stroke-width="1.400"/></svg>`;
    const spin = html`<span class="spin"><button class="up" aria-label="增加"></button><button class="dn" aria-label="减少"></button></span>`;
    return html`
      <div class="strip"><div class="rack"><div class="dots"></div>
        ${rack.map(([n, d]) => n === "-" ? html`<hr />` : html`<button aria-label=${n}>${icon(n)}${d ? caret("big") : nothing}</button>`)}
      </div></div>
      <div class="panel">
        <div class="tabs">${["part", "props", "config", "target"].map((n) => html`<button class=${n === "props" ? "on" : ""} aria-label=${n}>${icon(n)}</button>`)}</div>
        <div class="head">${icon("indentOn")}<h2>压凹</h2><button aria-label="帮助">?</button></div>
        <div class="acts"><button aria-label="确定">${icon("ok")}</button><button aria-label="取消">${icon("no")}</button></div>
        <section>
          <h3>选择${chev}</h3>
          <div class="body">
            <label class="lead" for="tgt">目标实体:</label>
            ${icon("bodyA", "s18")}
            <div class="target"><span class="sw"></span><input id="tgt" .value=${"凸台-拉伸1"} /></div>
            <label class="opt"><input type="radio" name="keep" checked />保留选择(K)</label>
            <label class="opt"><input type="radio" name="keep" />移除选择(R)</label>
            <label class="cap" for="zone">工具实体区域:</label>
            ${icon("bodyB", "s18")}
            <textarea id="zone" .value=${"点@面<1>"}></textarea>
            <label class="opt cutoff"><input type="checkbox" />切除(C)</label>
          </div>
        </section>
        <section>
          <h3>参数(P)${chev}</h3>
          <div class="body num2">
            <span class="t1">${icon("thick", "s18")}<span>T1</span></span>
            <div class="num"><input aria-label="厚度" .value=${"10.00mm"} />${spin}</div>
            <button class="rev" aria-label="反向">${icon("reverse")}</button>
            <div class="num"><input aria-label="间隙" .value=${"0.00mm"} />${spin}</div>
          </div>
        </section>
      </div>
      <button class="split" aria-label="折叠面板"><i></i><i></i><i></i></button>`;
  }
}

/* ---------- graphics area ---------- */

@customElement("graphics-view")
class GraphicsView extends LitElement {
  static styles = [base, css`
    :host { display: block; position: relative; background: #c4c7d3; overflow: hidden; color: #000; border-right: 1px solid #1d4a8a; }
    .scene { position: absolute; left: 0; top: 0; width: 100%; height: 100%; }
    .tree { position: relative; list-style: none; margin: 0; padding: 24px 0 0 3px; width: 300px; font-size: 15px; }
    .row { display: flex; align-items: center; height: 22px; white-space: nowrap; }
    .row > span:last-child { padding-left: 5px; }
    .l1, .l2 { padding-left: 13px; }
    .cell { position: relative; display: flex; align-items: center; flex: none; width: 20px; height: 22px; padding-left: 5px;
      background: linear-gradient(#707280, #707280) 9px 0 / 1px 100% no-repeat, linear-gradient(#707280, #707280) 9px 11px / 11px 1px no-repeat; }
    .l0 .cell { width: 14px; padding: 0; background: linear-gradient(#707280, #707280) 9px 11px / 5px 1px no-repeat; }
    .cell.pass { background: linear-gradient(#707280, #707280) 9px 0 / 1px 100% no-repeat; }
    .cell.sub { width: 19px; }
    .cell.end { background: linear-gradient(#707280, #707280) 9px 0 / 1px 11px no-repeat, linear-gradient(#707280, #707280) 9px 11px / 11px 1px no-repeat; }
    .box { width: 9px; height: 9px; border: 1px solid #707280;
      background: linear-gradient(#000, #000) center / 5px 1px no-repeat, #c4c7d3; }
    .box.plus { background: linear-gradient(#000, #000) center / 5px 1px no-repeat, linear-gradient(#000, #000) center / 1px 5px no-repeat, #c4c7d3; }
    .sel { color: #00f6ff; }
    .hud, .win, .confirm, .pane, .tip, .tag, .drop, .bird { position: absolute; }
    .hud { left: 597px; top: 6px; display: flex; align-items: center; gap: 7px; }
    .hud .caret { margin: 0 0 0 -3px; border-top-color: #4a4c66; }
    .win { right: 7px; top: 6px; display: flex; gap: 8px; }
    .confirm { right: 40px; top: 31px; width: 62px; height: 56px; opacity: .45; }
    .pane { right: 0; top: 60px; display: flex; flex-direction: column; }
    .pane button { display: grid; place-items: center; width: 23px; height: 24px; border: 1px solid #6e7188; border-right: 0; border-radius: 3px 0 0 3px; background: #b4b7cb; }
    .pane button:first-child { background: #eef0f6; }
    .tip { left: 45px; top: 49px; width: 236px; height: 87px; padding: 0 24px 0 6px; font-size: 15px; line-height: 20px; color: #35376e; border: 1px solid #9a9ca6;
      border-radius: 8px; background: linear-gradient(#e3e4ec, #fafbfe); }
    .tip h4 { display: flex; align-items: center; gap: 3px; margin: 0 0 2px; font-size: 15px; line-height: 20px; }
    .tip h4 svg { width: 13px; height: 13px; }
    .tip p { margin: 0; }
    .beak { position: absolute; left: 4px; top: 58px; width: 43px; height: 22px; z-index: 1; }
    .tag { display: flex; justify-content: flex-end; align-items: center; height: 14px; padding-right: 6px; font-size: 13px; line-height: 13px; color: #2b2c6e; border: 1px solid #3a3b78; background: #dfe1ea; }
    .tag.a { left: 276px; top: 368px; width: 101px; }
    .tag.b { left: 1138px; top: 508px; width: 74px; }
    .bird { right: 158px; bottom: 138px; width: 70px; height: 70px; }
    .drop { right: 93px; bottom: 115px; display: flex; align-items: center; width: 104px; height: 25px; border: 1px solid #2b86c8; border-radius: 3px; overflow: hidden; color: #4d7096; font-size: 12px;
      background: linear-gradient(#dceffb, #c8e6fa 50%, #a5d8f8 52%, #c4e8fb); box-shadow: 0 1px 2px #6668; }
    .drop i { display: grid; place-items: center; width: 29px; height: 25px; margin-right: 7px; background: linear-gradient(#43a8ee, #1c83d8); }
  `];

  private row(n: Node) {
    const box = n.box ? html`<i class=${classMap({ box: true, plus: n.box === "+" })}></i>` : nothing;
    return html`<li class="row l${n.lvl}">
      ${n.lvl === 2 ? html`<span class="cell pass"></span>` : nothing}
      <span class=${classMap({ cell: true, sub: n.lvl === 2, end: !!n.last })}>${box}</span>
      ${icon(n.icon)}<span class=${n.sel ? "sel" : ""}>${n.text}</span></li>`;
  }

  /* countersunk corner hole: outer cone, bore wall, and the opening that shows what lies behind */
  private hole(x: number, y: number, fill: string) {
    return svg`
      <ellipse cx=${x} cy=${y} rx="72" ry="56" transform="rotate(-39 ${x} ${y})" fill="url(#bore)"/>
      <ellipse cx=${x - 17} cy=${y - 23} rx="42" ry="32" transform="rotate(-39 ${x - 17} ${y - 23})" fill="#4b4c57"/>
      <ellipse cx=${x - 23} cy=${y - 29} rx="33" ry="25" transform="rotate(-50 ${x - 23} ${y - 29})" fill=${fill} stroke-width="2"/>`;
  }

  private pin(x: number, y: number, r: number) {
    return svg`<ellipse cx=${x} cy=${y} rx=${r} ry=${r * 0.75} transform="rotate(-39 ${x} ${y})" fill="#4f505b"/>
      <ellipse cx=${x - 4} cy=${y - 3} rx=${r * 0.82} ry=${r * 0.62} transform="rotate(-39 ${x - 4} ${y - 3})" fill="#585964" stroke-width="2"/>`;
  }

  private model() {
    return svg`<g transform="translate(1030 360) scale(0.3333)" stroke="#0c0c10" stroke-width="4" stroke-linejoin="round" fill="none">
      <path d="M65 410C62 300 110 200 200 130 290 65 370 45 430 48 510 52 570 95 610 150L700 240 300 320 180 605 110 520C80 490 65 450 65 410z" fill="url(#cyl)" stroke="#4a96e8"/>
      <path d="M118 800V780L288 292Q315 225 390 218L890 240Q965 258 966 330L955 372 800 830Q775 905 700 912L190 888Q150 880 122 830z" fill="#5a5b68"/>
      <path d="M118 800V780L288 292 305 315 145 800Q140 850 165 878 125 850 118 800z" fill="#6c6d7c"/>
      <path d="M288 292Q315 225 390 218L410 247Q330 252 305 315z" fill="#666776"/>
      <path d="M145 800L305 315Q330 252 410 247L905 270Q960 285 966 330L955 372 800 830Q775 905 700 912L190 888Q140 875 145 800z" fill="#636470"/>
      <path d="M890 240L908 268M118 780L145 825"/>
      <ellipse cx="551" cy="578" rx="300" ry="221" transform="rotate(-39 551 578)" fill="#585965"/>
      <ellipse cx="537" cy="560" rx="275" ry="204" transform="rotate(-39 537 560)" fill="#4e4f5b"/>
      <path d="M640 328C740 335 800 420 784 540L745 490C735 420 690 400 640 328z" fill="url(#shine)" stroke="none"/>
      <path d="M640 328L712 425" stroke-width="3"/>
      <path d="M290 575C310 510 340 460 375 436L415 468C370 520 350 580 345 635z" fill="url(#wall)" stroke-width="3"/>
      <path d="M480 390C540 365 640 370 712 430L705 455 598 495 545 490 470 430z" fill="#5d5e6a" stroke-width="3"/>
      <path d="M470 402C540 350 660 365 712 425M478 408C545 385 640 385 706 435M470 430L545 496 600 497 712 452" stroke-width="3"/>
      <path d="M430 400L470 430 545 492 605 540 582 600 568 592 425 405z" fill="url(#rail)" stroke-width="3"/>
      <path d="M598 530L730 475 745 500C745 560 725 620 690 655L650 650 575 605z" fill="#5f606c" stroke-width="3"/>
      <path d="M590 500L700 455 735 480M606 540L740 487M545 492L590 500 606 540 582 600M738 490C738 560 715 615 688 645M575 605L640 655Q665 642 690 657" stroke-width="3"/>
      <path d="M345 635C350 560 375 500 420 470L515 540 505 590 345 640z" fill="#5d5e6a" stroke-width="3"/>
      <path d="M355 630C360 560 390 505 430 480M340 640C335 570 360 500 405 465Q420 455 435 470L515 532 507 590 480 610 400 635zM345 640Q370 628 400 640" stroke-width="3"/>
      <path d="M515 560L605 665M400 405L515 530M378 432L410 462M510 580L600 670" stroke-width="3"/>
      <path d="M400 680L490 655 550 655 608 690V720C540 760 450 760 390 712z" fill="#60616d" stroke-width="3"/>
      <path d="M288 580L400 700M290 600L385 710C430 760 540 765 610 718V690L545 640 490 635 400 680zM350 650L410 690M480 610L492 640M515 590L545 640" stroke-width="3"/>
      ${this.pin(427, 562, 47)}${this.pin(667, 575, 49)}${this.pin(549, 433, 27)}${this.pin(636, 438, 28)}${this.pin(458, 704, 27)}${this.pin(545, 706, 27)}
      <g stroke-width="4"><path d="M503 425l12 12M508 445l16-8M515 425l8 22M668 430l14-4M672 445l12-12M668 450l18-4M480 560l18 10M484 575l14-12M490 550v32M604 555l-4 30M610 560l-5 26"/>
        <path d="M490 665l16 4M494 680l10-8M496 660v26M526 662l14 6M528 682l12-8M534 658v28"/></g>
      ${this.hole(388, 327, "#004078")}${this.hole(877, 348, "url(#sky)")}${this.hole(228, 808, "url(#sky)")}${this.hole(716, 828, "url(#sky)")}
      <path d="M850 345l18-4 12-18M215 800l6-14 14 2 8-14" stroke-width="4"/>
      <g stroke="#55a4f7" stroke-width="4">
        <path d="M355 798C270 760 240 690 248 600 265 440 440 285 610 285 740 290 830 380 818 500 800 640 680 770 537 805L355 572C470 545 600 440 628 290 640 230 625 170 610 150L750 325Q800 370 812 430"/>
        <path d="M118 532C145 555 172 555 180 570L355 798M110 520L290 755Q320 790 355 798"/></g>
    </g>`;
  }

  render() {
    return html`
      <svg class="scene" aria-hidden="true">
        <defs>
          <linearGradient id="cyl" gradientUnits="userSpaceOnUse" x1="60" y1="540" x2="250" y2="390"><stop offset="0" stop-color="#00509c"/><stop offset=".25" stop-color="#0b559e"/><stop offset=".42" stop-color="#3273b3"/><stop offset=".75" stop-color="#003a70"/><stop offset="1" stop-color="#003464"/></linearGradient>
          <linearGradient id="shine" x1="0" y1="0" x2="1" y2=".6"><stop offset="0" stop-color="#5b5c69"/><stop offset=".55" stop-color="#9a9bab"/><stop offset="1" stop-color="#5b5c69"/></linearGradient>
          <linearGradient id="wall" x1="0" y1="1" x2=".8" y2="0"><stop offset="0" stop-color="#565763"/><stop offset=".4" stop-color="#8a8b9a"/><stop offset="1" stop-color="#50515c"/></linearGradient>
          <linearGradient id="rail" x1="0" y1="0" x2="1" y2="1"><stop offset="0" stop-color="#8e8f9d"/><stop offset=".3" stop-color="#62636f"/><stop offset="1" stop-color="#62636f"/></linearGradient>
          <linearGradient id="bore"><stop offset="0" stop-color="#555662"/><stop offset=".7" stop-color="#5c5d69"/><stop offset="1" stop-color="#757684"/></linearGradient>
          <linearGradient id="sky" x1="0" y1="0" x2="0" y2="1"><stop offset="0" stop-color="#b4b6c4"/><stop offset="1" stop-color="#e6e7ee"/></linearGradient>
        </defs>
        <g transform="translate(-449 -134)">
          ${this.model()}
          <g fill="none" stroke="#4aa0fa">
            <path d="M1014 265L1384 281 1522 458 1153 442zM892 629L1262 645 1400 823 1031 806zM1014 265L892 629M1384 281L1262 645M1522 458L1400 823M1153 442L1031 806"/></g>
          <path d="M825 508L1055 501M1587 648L1394 643" stroke="#3a382c" fill="none"/>
          <circle cx="1055" cy="501" r="3" fill="#dfe1ea" stroke="#111"/><circle cx="1394" cy="643" r="3" fill="none" stroke="#111"/>
          <g stroke-linecap="round">
            <path d="M499 926H478" stroke="#b81c1c" stroke-width="4"/><path d="M468 926l12-6v12z" fill="#d42a2a"/>
            <path d="M499 928L493 950" stroke="#1c6a24" stroke-width="4"/><path d="M486 946l11 3-7 10z" fill="#174f1c"/>
            <path d="M500 927L509 939" stroke="#1a1a9c" stroke-width="4"/><path d="M505 942l9-7 2 12z" fill="#2020cc"/></g>
          <g font-family="Liberation Serif, serif" font-size="12"><text x="459" y="930" fill="#e81010">X</text><text x="483" y="969" fill="#108a18">Y</text><text x="512" y="954" fill="#1818e8">Z</text></g>
        </g>
      </svg>
      <ul class="tree">${tree.map((n) => this.row(n))}</ul>
      <div class="tip" role="alert"><h4>${icon("error")}重建模型错误</h4><p>凹陷不能处理此情形。请尝试不同几何体或输入一较小厚度值。</p></div>
      <svg class="beak" viewBox="0 0 43 22"><path d="M43 2H1l42 18" fill="#e6e7ef" stroke="#9a9ca6"/></svg>
      <div class="hud">${["fit", "area", "prev", "column", "orient", "/", "style", "/", "glasses", "/", "grayball", "scene", "/", "gold", "/"].map((n) =>
        n === "/" ? caret() : html`<button aria-label=${n}>${icon(n)}</button>`)}</div>
      <div class="win"><button aria-label="最小化">${icon("min")}</button><button aria-label="还原">${icon("restore")}</button><button aria-label="关闭">${icon("close")}</button></div>
      <svg class="confirm" viewBox="0 0 62 56"><path d="M4 16l4-3 5 5L25 3l3 3-15 20z" fill="#6fcf74" stroke="#2f8a3a"/><path d="M38 36l4-4 8 11 8-11 4 4-9 11 8 9-3 3-8-9-8 9-4-3 8-9z" fill="#e66a6a" stroke="#a33"/></svg>
      <div class="pane">${["home", "library", "folderY", "swfind", "palette", "beach", "custom"].map((n) => html`<button aria-label=${n}>${icon(n)}</button>`)}</div>
      <span class="tag a">工具实体区域</span><span class="tag b">目标实体</span>
      <svg class="bird" viewBox="0 0 70 70"><defs><linearGradient id="bd" x1="0" y1="0" x2=".6" y2="1"><stop offset="0" stop-color="#6ac6fb"/><stop offset=".5" stop-color="#4a98fa"/><stop offset="1" stop-color="#1238f0"/></linearGradient></defs>
        <circle cx="35" cy="35" r="34" fill="#eef5fc" stroke="#b8bccb"/>
        <path d="M3 14l14 3c6-1 10 3 12 7C38 14 54 12 64 6c-1 8-4 11-7 14 0 6-3 9-7 12l18 7-25 5 8 22c-8-14-28-12-33-28-2-8 1-11-1-16z" fill="url(#bd)"/><path d="M50 32l18 7-25 4z" fill="#2e6ef2"/></svg>
      <button class="drop"><i>${icon("cloud", "s20")}</i>拖拽上传</button>`;
  }
}

/* ---------- windows taskbar ---------- */

@customElement("task-bar")
class TaskBar extends LitElement {
  static styles = [base, css`
    :host { display: flex; position: relative; height: 48px; border-top: 1px solid #2c4a66; color: #fff; overflow: hidden;
      background: linear-gradient(90deg, #1c5c96, #2f88bd 9%, #3b9bce 17%, #43a2d6 38%, #2f86c6 46%, #2a80c8 56%, #1f6cae 70%, #1c63ac 76%, #174c86 79%, #164580); }
    .glow { position: absolute; left: 0; top: 0; width: 100%; height: 100%; }
    .apps { position: relative; display: flex; align-items: stretch; flex: 1; padding-left: 10px; }
    .apps button { display: grid; place-items: center; width: 68px; margin-right: 2px; border-radius: 3px; }
    .apps .orb { width: 46px; margin-right: 15px; }
    .apps .open { border: 1px solid #2f5f88; background: linear-gradient(#fff8, #fff4 50%, #fff6); box-shadow: inset 0 0 0 1px #fff8; }
    .apps .front { background: linear-gradient(#fffd, #fff8 60%, #fffa); }
    .apps .ie { width: 61px; }
    .apps .stack { box-shadow: inset 0 0 0 1px #fff8, 3px 0 0 #fff6, 4px 0 0 #2f5f88, 7px 0 0 #fff4; margin-right: 9px; }
    .apps svg { width: 42px; height: 42px; }
    .apps .orb svg { width: 46px; height: 46px; }
    .tray { position: relative; display: flex; align-items: center; gap: 10px; }
    .tray svg { width: 20px; height: 20px; }
    .tray .kb { margin-right: 10px; }
    .clock { display: flex; flex-direction: column; justify-content: center; align-items: center; width: 84px; margin: 0 6px 0 4px; font-size: 14px; line-height: 22px; padding-top: 2px; }
    .peek { width: 14px; border: 1px solid #8fb0d0; background: #fff3; position: relative; }
  `];
  render() {
    const a = (cls: string, label: string, art: unknown) => html`<button class=${cls} aria-label=${label}><svg viewBox="0 0 42 42">${art}</svg></button>`;
    const s = (label: string, art: unknown, cls = "") => html`<svg class=${cls} viewBox="0 0 20 20" role="img" aria-label=${label}>${art}</svg>`;
    return html`
      <svg class="glow" viewBox="0 0 1920 48" preserveAspectRatio="none"><defs><filter id="b"><feGaussianBlur stdDeviation="2"/></filter></defs>
        <g filter="url(#b)" fill="none"><path d="M1290-4Q1340 16 1374 52" stroke="#b9dcff" stroke-width="10"/><path d="M690 52L870-2" stroke="#7cc4ea" stroke-width="6" opacity=".4"/>
        <path d="M620 20Q860 36 1080-2" stroke="#7cc4ea" stroke-width="8" opacity=".3"/><path d="M20 48L75 0" stroke="#9fd0ea" stroke-width="14" opacity=".3"/></g>
        <path d="M1215 0h70q50 24 80 48h-110z" fill="#5a9ad8" opacity=".3"/></svg>
      <div class="apps">
        ${a("orb", "开始", svg`<circle cx="21" cy="21" r="20" fill="#164b7c" stroke="#8fbfdc"/><path d="M3 27a19 19 0 0 0 36 0c-8-8-28-8-36 0z" fill="#35c4ee"/><path d="M4 14a19 19 0 0 1 34 0c-8 4-26 4-34 0z" fill="#fff5"/>
          <path d="M12 10c4-2 6-2 10 0l-3 11c-3-2-7-2-10-1z" fill="#e8622a"/><path d="M24 11c3 2 7 2 11 0l-4 11c-3 1-7 1-10-1z" fill="#8cc63e"/><path d="M8 22c4-1 7-1 11 1l-3 10c-3-2-7-2-10-1z" fill="#4aa8ea"/><path d="M21 23c3 2 6 2 10 1l-3 10c-3 2-7 1-10-1z" fill="#ffc926"/>`)}
        ${a("open", "资源管理器", svg`<path d="M3 4l10-2 2 3h22v30H3z" fill="#e8c660"/><path d="M6 3h10v10H6zM16 5h10v10H16zM26 7h12v10H26z" fill="#fbfbf4" stroke="#c9b060"/><path d="M7 3h4v3H7zM17 5h4v3h-4z" fill="#3a9a3a"/><path d="M28 8h6v3h-6z" fill="#2a7ad0"/>
          <path d="M2 12h37v27H2z" fill="#f6df8e" stroke="#d3b052"/><path d="M8 40V27h27v13h-6v-7H14v7z" fill="#a5daf2" stroke="#6fb4d8"/>`)}
        ${a("flat", "有道", svg`<rect x="1" y="1" width="40" height="40" rx="7" fill="#e32119"/><text x="21" y="28" text-anchor="middle" font-family="Noto Sans CJK SC, sans-serif" font-weight="bold" font-size="17" fill="#fff">有道</text>`)}
        ${a("flat", "浏览器", svg`<path d="M5 11C9 1 20 0 29 5l-2 5c-8 2-14 2-22 1z" fill="#f4581c"/><path d="M2 15c7 1 14 0 23-3C21 19 13 24 3 28 1 24 1 19 2 15z" fill="#ffc10e"/><path d="M6 31c9-4 18-8 25-15 2 8-3 16-13 25C12 40 8 36 6 31z" fill="#3cc41c"/><path d="M34 17c6 9 3 21-11 24 7-8 11-14 11-24z" fill="#1ea0f2"/><path d="M24 1c7 0 12 3 14 10-4-5-9-7-14-10z" fill="#d93ae0"/><circle cx="39" cy="15" r="2.500" fill="#b23ae0"/>`)}
        ${a("open", "百度云", svg`<path d="M1 1h40v40H1z" fill="#52b4f2"/><g fill="none" stroke="#fff" stroke-width="4.500"><circle cx="21" cy="15" r="6.500"/><circle cx="12" cy="27" r="6.500"/><circle cx="30" cy="27" r="6.500"/></g>`)}
        ${a("open front", "SolidWorks", svg`<path d="M2 10L20 2l20 6v24L22 41 2 33z" fill="#d41a18"/><path d="M2 10L20 2l20 6-18 8z" fill="#f0564e"/><path d="M22 16l18-8v24L22 41z" fill="#a80e0e"/>
          <text x="4" y="31" font-family="Liberation Sans, sans-serif" font-weight="bold" font-size="18" fill="#fff">S</text><text x="21" y="32" font-family="Liberation Sans, sans-serif" font-weight="bold" font-size="19" fill="#fff">W</text>`)}
        ${a("open ie stack", "Internet Explorer", svg`<path fill-rule="evenodd" d="M38 25H16c1 8 10 9 14 3h8C34 43 6 43 6 23 7 3 39 3 38 25zM16 19h13c-1-7-12-7-13 0z" fill="#2a8ade" stroke="#0e4c94" stroke-width="1.500"/><path d="M2 40C-4 32 16 4 34 1c8-1 8 5 3 11 2-6 1-8-4-6C18 10 2 32 6 37c2 2 6 0 9-2-4 4-10 8-13 5z" fill="#f5c32c"/>`)}
        ${a("open", "安装程序", svg`<path d="M1 14l11-2 4 2v24l-6 2V18H1z" fill="#d8d8d2" stroke="#555"/><path d="M18 1h20v16H18z" fill="#e6e6e0" stroke="#555"/><path d="M20 3h16v12H20z" fill="#15b8ea"/><path d="M22 12L32 3M28 14l7-7" stroke="#c8f4ff" stroke-width="2"/><path d="M20 19h20v5H24z" fill="#cfcfca" stroke="#555"/>
          <circle cx="24" cy="30" r="11" fill="#dfe6e6" stroke="#777"/><path d="M24 30L14 26a11 11 0 0 1 6-6zM24 30l10 4a11 11 0 0 1-6 6z" fill="#f4d86a"/><path d="M24 30L22 19h6zM24 30l1 11-6-1z" fill="#7ad8c8"/><circle cx="24" cy="30" r="3" fill="#fff" stroke="#555"/>`)}
        ${a("flat", "爱奇艺", svg`<rect x="1" y="1" width="40" height="40" rx="4" fill="#06c40a"/><path d="M5 13c1-5 4-5 16-5s15 0 16 5M5 29c1 5 4 5 16 5s15 0 16-5" fill="none" stroke="#fff" stroke-width="2.500"/><text x="21" y="26" text-anchor="middle" font-family="Liberation Sans, sans-serif" font-weight="bold" font-size="15" fill="#fff">iQIYI</text>`)}
      </div>
      <div class="tray">
        ${s("键盘", svg`<path d="M1 7h18v8H1z" fill="#e6e6e6" stroke="#888"/><path d="M3 9h14M3 11h14M5 13h10" stroke="#555" stroke-dasharray="2 1"/><path d="M4 6c2-5 6 0 8-2s3-2 5-2" fill="none" stroke="#aaa"/>`, "kb")}
        ${s("网络", svg`<path d="M1 17l8-8 3-6 3-1-4 7-2 8z" fill="#e21a1a"/><path d="M11 10l8 7h-6z" fill="#1fd21f"/>`)}
        ${s("百度云", svg`<path d="M0 0h20v20H0z" fill="#3fb0ee"/><g fill="none" stroke="#fff" stroke-width="2.500"><circle cx="10" cy="8" r="3"/><circle cx="6" cy="12.500" r="2.500"/><circle cx="14" cy="12.500" r="2.500"/></g>`)}
        ${s("迅雷", svg`<rect width="20" height="20" rx="2" fill="#fff"/><path d="M1 4l5 2c2 0 3 1 4 2 3-2 6-2 8-5 0 5-2 7-4 8l4 1-5 2 1 5c-3-4-9-3-9-8z" fill="#2a6ef0"/>`)}
        ${s("QQ", svg`<path d="M10 0c4 0 6 3 6 7l3 6-2 2-1-1c0 3-3 5-6 5s-6-2-6-5l-1 1-2-2 3-6c0-4 2-7 6-7z" fill="#111"/><ellipse cx="10" cy="14" rx="5" ry="5" fill="#fff"/><circle cx="8" cy="5" r="1.600" fill="#fff"/><circle cx="12" cy="5" r="1.600" fill="#fff"/><path d="M3 9c4 2 10 2 14 0v3c-4 2-10 2-14 0z" fill="#e21a1a"/><path d="M7 7h6l-3 2zM3 18h6v2H3zM11 18h6v2h-6z" fill="#f5a81c"/>`)}
        ${s("360", svg`<circle cx="10" cy="10" r="9.500" fill="#f2d40e"/><path d="M10 1a9 9 0 0 0-9 9c3-4 6-5 10-4s7-1 7-1-3-4-8-4z" fill="#3fb52e"/><path d="M10 19a9 9 0 0 0 9-9c-3 5-7 5-10 4s-6 0-7 1 3 4 8 4z" fill="#f5ae0c"/><path d="M10 5v10M5 10h10" stroke="#14661a" stroke-width="3"/>`)}
        ${s("卫士", svg`<path d="M10 1c3 2 5 2 8 2 0 8-1 13-8 16C3 16 2 11 2 3c3 0 5 0 8-2z" fill="#eef6e6" stroke="#7c9a5a"/><path d="M10 4c2 1 4 1 5 1 0 6-1 9-5 11-4-2-5-5-5-11 1 0 3 0 5-1z" fill="#5fae1c"/><path d="M11 6l-4 5h3l-1 4 4-6h-3z" fill="#fff"/>`)}
        ${s("电源", svg`<path d="M2 3h9v15H2zM5 1h4v2H5z" fill="#1e3c64" stroke="#fff" stroke-width="1.500"/><path d="M4 6h5v10H4z" fill="#fff"/><path d="M13 3v4M17 3v4M11 7h8v4h-8zM15 11v6" stroke="#fff" fill="#fff" stroke-width="1.500"/>`)}
        ${s("信号", svg`<path d="M2 14h3v3H2zM6 12h3v5H6zM10 9h3v8h-3zM14 5h3v12h-3z" fill="#fff"/>`)}
        ${s("音量", svg`<path d="M1 7h4l5-5v16l-5-5H1z" fill="#fff"/><circle cx="14" cy="14" r="5" fill="#fff" stroke="#d81f1f" stroke-width="2"/><path d="M11 11l6 6" stroke="#d81f1f" stroke-width="2"/>`)}
        <div class="clock"><span>10:03</span><span>2017/4/7</span></div>
      </div>
      <div class="peek"></div>`;
  }
}

/* ---------- application shell ---------- */

@customElement("app-root")
class AppRoot extends LitElement {
  static styles = [base, css`
    :host { display: flex; flex-direction: column; position: relative; min-height: 100vh; overflow: hidden; background: #c4c7d3;
      font: 14px/18px "Noto Sans", "Noto Sans CJK SC", sans-serif; }
    .work { flex: 1; display: grid; grid-template: 21px 1fr / 449px 1fr; border-bottom: 1px solid #000; }
    .cmd { display: flex; z-index: 3; width: 455px; color: #43454f; }
    .cmd button { flex: none; height: 19px; line-height: 16px; width: 56px; border: 1px solid #4c4e62; border-width: 0 1px 2px 0; background: #b5b8ca; }
    .cmd .on { background: linear-gradient(#dfe1ea, #f6f7fa); color: #222; border-bottom-color: #f6f7fa; height: 20px; }
    .cmd .w3 { width: 73px; } .cmd .w4 { width: 84px; }
    property-panel { grid-area: 2 / 1; }
    graphics-view { grid-area: 1 / 2 / 3 / 3; }
    .sheet { display: flex; height: 15px; background: #e0e3ec; border-bottom: 1px solid #4f5164; padding-left: 48px; color: #111; }
    .sheet button { line-height: 14px; height: 14px; border: 1px solid #55576a; border-top: 0; background: #c8cbdb; white-space: nowrap; }
    .sheet .nav { width: 16px; border-color: #9c9fb2; background: #b9bccd; display: grid; place-items: center; }
    .sheet .m { width: 50px; margin-left: 3px; background: #dfe1ea; }
    .sheet .n { width: 87px; padding-right: 6px; }
    .sheet path { fill: #8d90a6; }
    .status { display: flex; justify-content: flex-end; height: 21px; background: linear-gradient(#cdd0e4, #c8cbdd 50%, #aeb2c0); color: #111; font-size: 15px; line-height: 20px; }
    .status span { width: 237px; padding-left: 4px; border-left: 2px groove #eef; }
    .speed { position: absolute; right: 2px; bottom: 54px; display: flex; align-items: center; width: 128px; height: 48px; padding-left: 36px; border: 1px solid #9a9ca6; border-radius: 24px;
      background: linear-gradient(#fafafa, #dcdde0); box-shadow: 0 1px 3px #5558; font-size: 11px; line-height: 19px; color: #222; }
    .rates { display: grid; grid-template-columns: 10px 45px; }
    .rates span { text-align: right; }
    .up { color: #e8502a; } .down { color: #2aa050; }
    .ball { position: absolute; right: 98px; bottom: 48px; width: 62px; height: 62px; border-radius: 50%; display: grid; place-items: center; color: #fff; font: bold 17px "Liberation Sans", sans-serif;
      border: 3px solid #e8eaee; background: linear-gradient(#2c8f62, #056b44 48%, #43c95e 49%, #4bd066); box-shadow: 0 0 2px 1px #777, inset 0 0 0 2px #0a7a4a; }
    .plus { width: 24px; height: 24px; margin-left: 6px; }
    .mark { position: absolute; right: 7px; bottom: 4px; width: 185px; color: #1a1a1ad0; pointer-events: none; text-align: right; font: 24px/24px "Liberation Serif", "Noto Sans CJK SC", serif; }
    .mark div { display: flex; align-items: center; justify-content: space-between; font-size: 20px; line-height: 28px; font-style: italic; font-weight: bold; }
    .mark svg { width: 26px; height: 26px; margin-right: 4px; }
  `];
  render() {
    const tabs: [string, string][] = [["特征", "on"], ["草图", ""], ["曲面", ""], ["模具工具", "w3"], ["评估", ""], ["DimXpert", "w3"], ["办公室产品", "w4"]];
    const nav = ["M2 2v8M9 2L4 6l5 4z", "M8 2L3 6l5 4z", "M4 2l5 4-5 4z", "M3 2l5 4-5 4zM9 2h1v8H9z"];
    return html`
      <title-bar></title-bar>
      <ribbon-bar></ribbon-bar>
      <main class="work">
        <div class="cmd">${tabs.map(([n, c]) => html`<button class=${c}>${n}</button>`)}</div>
        <property-panel></property-panel>
        <graphics-view></graphics-view>
      </main>
      <div class="sheet">
        ${nav.map((d, i) => html`<button class="nav" aria-label="翻页${i + 1}"><svg width="12" height="12" viewBox="0 0 12 12"><path d=${d}/></svg></button>`)}
        <button class="m">模型</button><button class="n">运动算例 1</button>
      </div>
      <footer class="status"><span>正在编辑：零</span></footer>
      <task-bar></task-bar>
      <div class="speed"><div class="rates"><b class="up">↑</b><span>107K/s</span><b class="down">↓</b><span>2.9K/s</span></div>
        <svg class="plus" viewBox="0 0 24 24"><circle cx="11" cy="13" r="10" fill="#2f7fe0" stroke="#b9d4f4"/><path d="M11 7v12M5 13h12" stroke="#fff" stroke-width="2.500"/><circle cx="19" cy="5" r="5" fill="#e23a36"/></svg></div>
      <div class="ball">53%</div>
      <div class="mark"><div><svg viewBox="0 0 26 26"><path d="M2 14L14 2l8 5-5 5-4-2-6 6M8 20l12-9 4 4-11 10zM8 10l8 8" fill="none" stroke="#1a1a1a" stroke-width="2.200"/></svg>${[..."机械设计论坛"].map((c) => html`<span>${c}</span>`)}</div>www.zgjxcad.com</div>`;
  }
}
